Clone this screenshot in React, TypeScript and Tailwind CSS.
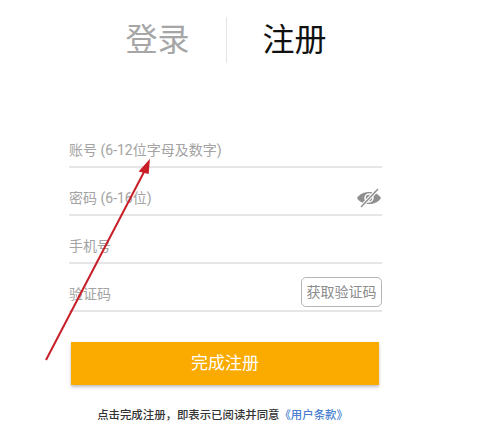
const font = "[font-family:Roboto,'Noto_Sans_CJK_SC','Liberation_Sans',sans-serif]";

type FieldProps = {
  label: string;
  children?: React.ReactNode;
};

const Field = ({ label, children }: FieldProps) => (
  <div className="flex h-[48px] items-center justify-between border-b-2 border-[#e6e6e6] pt-[12px]">
    <span className="mt-[2px] text-[14px] text-[#a3a3a3]">{label}</span>
    {children}
  </div>
);

const App = () => {
  return (
    <div className={`relative h-[440px] w-[480px] overflow-hidden bg-white ${font}`}>
      <div className="flex h-[120px] items-start justify-center pt-[17px] pr-[28px]">
        <div className="flex h-[46px] w-[100px] items-center justify-end pr-[36px] text-[32px] whitespace-nowrap text-[#a6a6a6]">
          登录
        </div>
        <div className="h-[46px] w-px bg-[#e4e4e4]" />
        <div className="flex h-[46px] w-[100px] items-center pl-[36px] text-[32px] whitespace-nowrap text-[#111111]">
          注册
        </div>
      </div>

      <div className="ml-[69px] w-[313px]">
        <Field label="账号 (6-12位字母及数字)" />
        <Field label="密码 (6-16位)">
          <svg width="26" height="22" viewBox="0 0 26 22" className="mt-[2px]">
            <path d="M1 11 C6 3 20 3 25 11 C20 19 6 19 1 11 Z" fill="#8f8f8f" />
            <circle cx="13" cy="11" r="4" fill="none" stroke="#ffffff" strokeWidth="1.5" />
            <path d="M5 20 L22 2" stroke="#ffffff" strokeWidth="3.5" />
            <path d="M5 20 L22 2" stroke="#8f8f8f" strokeWidth="1.5" />
          </svg>
        </Field>
        <Field label="手机号" />
        <Field label="验证码">
          <span className="mb-[2px] flex h-[30px] w-[81px] items-center justify-center rounded-[5px] border border-[#b5b5b5] text-[14px] text-[#8c8c8c]">
            获取验证码
          </span>
        </Field>
      </div>

      <div className="mt-[30px] ml-[71px] flex h-[43px] w-[308px] items-center justify-center bg-[#fbab00] text-[17px] text-white shadow-[0_2px_3px_rgba(0,0,0,0.25)]">
        完成注册
      </div>

      <div className="mt-[22px] pr-[35px] text-center text-[11.4px] font-medium whitespace-nowrap text-[#333333]">
        {"点击完成注册\uFF0C即表示已阅读并同意"}<span className="text-[#4a7fd0]">《用户条款》</span>
      </div>

      {/* annotation arrow over the form */}
      <svg width="480" height="440" viewBox="0 0 480 440" className="absolute top-0 left-0">
        <path d="M46 360 L144 172" stroke="#c81e28" strokeWidth="2" fill="none" />
        <path d="M149 161 L140 171 L148 173 Z" fill="#c81e28" stroke="#c81e28" strokeWidth="1.5" />
      </svg>
    </div>
  );
};

export default App;
